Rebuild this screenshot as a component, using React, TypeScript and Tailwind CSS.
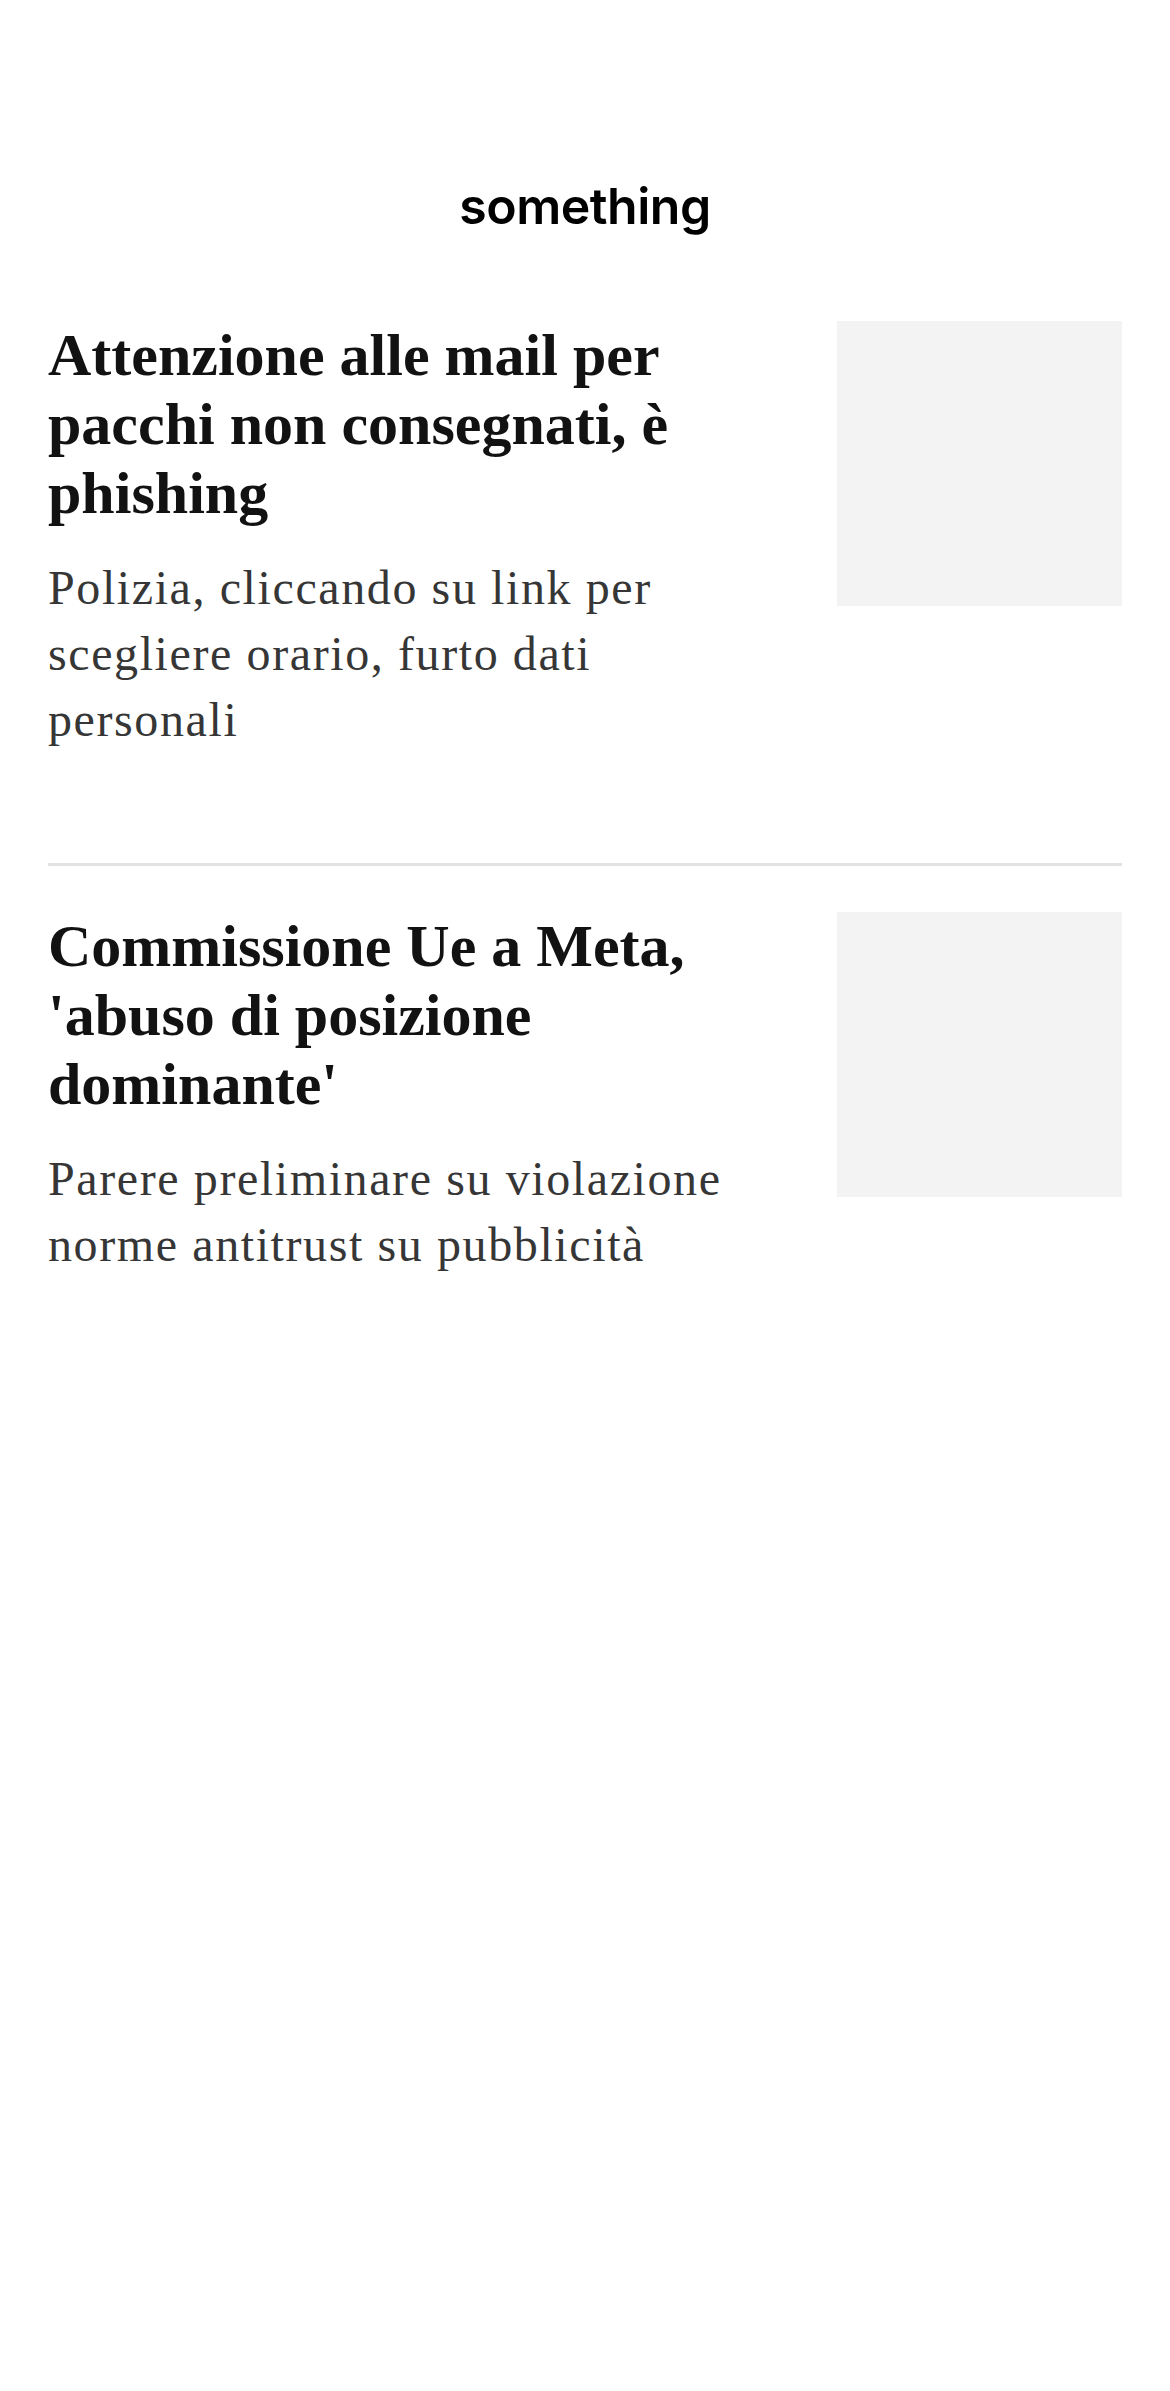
const articles = [
  {
    id: "phishing",
    title: "Attenzione alle mail per pacchi non consegnati, è phishing",
    summary: "Polizia, cliccando su link per scegliere orario, furto dati personali",
  },
  {
    id: "meta",
    title: "Commissione Ue a Meta, 'abuso di posizione dominante'",
    summary: "Parere preliminare su violazione norme antitrust su pubblicità",
  },
];

function ArticleRow({ title, summary, last }: { title: string; summary: string; last: boolean }) {
  return (
    <article className={last ? "pt-[46px]" : "pb-[110px] border-b-[3px] border-[#e2e2e2]"}>
      <div className="flex justify-between gap-[72px]">
        <div className="flex-1 min-w-0">
          <h2 className="font-['Liberation_Serif',serif] font-bold text-[60px] leading-[69px] text-[#121212]">
            {title}
          </h2>
          <p className="mt-[27px] font-['Liberation_Serif',serif] text-[48px] leading-[66px] tracking-[1.6px] text-[#363636]">
            {summary}
          </p>
        </div>
        <div className="w-[285px] h-[285px] shrink-0 bg-[#f3f3f3]" />
      </div>
    </article>
  );
}

export default function App() {
  return (
    <div className="min-h-[2391px] bg-white px-[48px]">
      <header className="pt-[177px] pb-[86px] flex justify-center">
        <span className="font-['Inter',sans-serif] font-semibold text-[50px] leading-[58px] text-black tracking-[-0.5px]">
          something
        </span>
      </header>
      <main>
        {articles.map((a, i) => (
          <ArticleRow key={a.id} title={a.title} summary={a.summary} last={i === articles.length - 1} />
        ))}
      </main>
    </div>
  );
}
